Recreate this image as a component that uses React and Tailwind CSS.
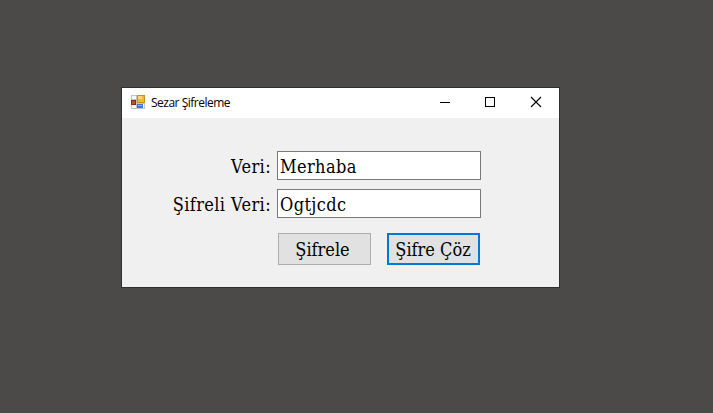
function AppIcon() {
  return (
    <svg className="mb-0.5" width="14" height="14" viewBox="0 0 14 14" shapeRendering="crispEdges">
      <rect width="14" height="14" fill="#c3c3c3" />
      <rect x="1" y="1" width="4" height="3" fill="#fff" />
      <rect x="1" y="10" width="4" height="3" fill="#fff" />
      <rect x="12" y="9" width="1" height="4" fill="#fff" />
      <rect y="5" width="5" height="5" fill="#a0201a" />
      <rect x="1" y="6" width="3" height="3" fill="#c84a3a" />
      <rect x="6" width="8" height="8" fill="#c8921e" />
      <rect x="7" y="1" width="6" height="6" fill="#f0bc30" />
      <rect x="7" y="1" width="4" height="3" fill="#fbd870" />
      <rect x="6" y="9" width="6" height="4" fill="#3f74d6" />
      <rect x="7" y="10" width="4" height="1" fill="#8db4f4" />
    </svg>
  );
}

function TitleBar() {
  return (
    <header className="flex h-[30px] items-center bg-white pl-[9px]">
      <AppIcon />
      <h1 className="ml-1.5 flex-1 whitespace-nowrap font-['Open_Sans','Noto_Sans',sans-serif] text-[12px] leading-[30px] tracking-[-0.5px] text-black">
        Sezar Şifreleme
      </h1>
      <div className="flex text-black">
        <button aria-label="Minimize" className="flex h-[30px] w-[46px] justify-center">
          <svg width="46" height="30" fill="none" stroke="currentColor" shapeRendering="crispEdges">
            <path d="M19 14.5h10" />
          </svg>
        </button>
        <button aria-label="Maximize" className="flex h-[30px] w-[45px] justify-center">
          <svg width="45" height="30" fill="none" stroke="currentColor" shapeRendering="crispEdges">
            <rect x="18.5" y="9.5" width="9" height="9" />
          </svg>
        </button>
        <button aria-label="Close" className="flex h-[30px] w-[47px] justify-center">
          <svg width="47" height="30" fill="none" stroke="currentColor" strokeWidth="1.1">
            <path d="M19 9l10 10M29 9l-10 10" />
          </svg>
        </button>
      </div>
    </header>
  );
}

function Field({ label, value }) {
  return (
    <div className="flex h-[29px] tracking-[0.4px]">
      <label className="w-[149px] whitespace-nowrap text-right leading-[31px]">{label}</label>
      <div className="ml-1.5 w-[204px] border border-[#7a7a7a] bg-white pl-[2px] leading-[29px]">{value}</div>
    </div>
  );
}

export default function App() {
  return (
    <main className="flex h-[413px] w-[713px] items-start overflow-hidden bg-[#4c4a48] pl-[121px] pt-[87px]">
      <section className="h-[201px] w-[439px] border border-[#303030] bg-[#f0f0f0]">
        <TitleBar />
        <div className="flex flex-col pt-[33px] font-['Georgia','DejaVu_Serif_Condensed','DejaVu_Serif',serif] text-[18px] [font-stretch:condensed] text-black">
          <div className="flex flex-col gap-[9px]">
            <Field label="Veri:" value="Merhaba" />
            <Field label="Şifreli Veri:" value="Ogtjcdc" />
          </div>
          <div className="mt-[15px] flex gap-4 pl-[156px]">
            <button className="h-8 w-[93px] whitespace-nowrap border border-[#adadad] bg-[#e1e1e1] pr-1 leading-[32px]">
              Şifrele
            </button>
            <button className="h-8 w-[93px] whitespace-nowrap border-2 border-[#0078d7] bg-[#e1e1e1] pr-px leading-[30px]">
              Şifre Çöz
            </button>
          </div>
        </div>
      </section>
    </main>
  );
}
